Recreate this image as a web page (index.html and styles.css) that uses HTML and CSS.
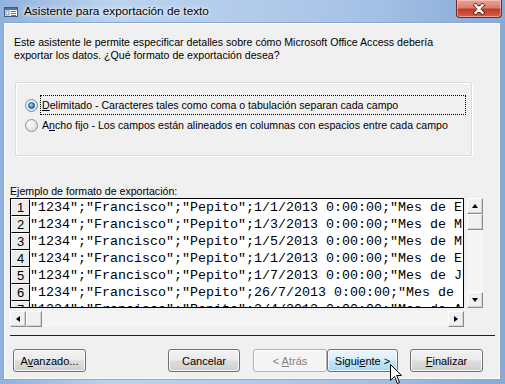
FILE: index.html
```html
<!DOCTYPE html>
<html lang="es">
<head>
<meta charset="UTF-8">
<title>Asistente para exportación de texto</title>
<link rel="stylesheet" href="styles.css">
</head>
<body>
  <div class="window">
    <div class="titlebar">
      <svg class="app-icon" width="14" height="10" viewBox="0 0 14 10">
        <rect x="0.5" y="0.5" width="13" height="9" fill="#fff" stroke="#3a5a8a"/>
        <rect x="1" y="1" width="12" height="2" fill="#4a74b0"/>
        <rect x="2" y="4" width="3" height="4" fill="none" stroke="#5a78a0" stroke-width="0.8"/>
        <line x1="7" y1="4.5" x2="12" y2="4.5" stroke="#5a78a0"/>
        <line x1="7" y1="6.5" x2="12" y2="6.5" stroke="#5a78a0"/>
        <line x1="7" y1="8.5" x2="12" y2="8.5" stroke="#5a78a0"/>
      </svg>
      <span class="title">Asistente para exportación de texto</span>
      <div class="close-btn">
        <svg width="14" height="12" viewBox="0 0 14 12">
          <path d="M2 1 L7 5 L12 1 M2 11 L7 7 L12 11" fill="none" stroke="#5b1a14" stroke-width="4"/>
          <path d="M2.5 1.5 L7 5.2 L11.5 1.5 M2.5 10.5 L7 6.8 L11.5 10.5 M3 1.5 L11 10.5 M11 1.5 L3 10.5" fill="none" stroke="#fff" stroke-width="2.2"/>
        </svg>
      </div>
    </div>

    <div class="client">
      <p class="intro">Este asistente le permite especificar detalles sobre cómo Microsoft Office Access debería<br>exportar los datos. ¿Qué formato de exportación desea?</p>

      <div class="groupbox">
        <div class="option">
          <span class="radio checked"></span>
          <span class="option-text focused"><u>D</u>elimitado - Caracteres tales como coma o tabulación separan cada campo</span>
        </div>
        <div class="option">
          <span class="radio"></span>
          <span class="option-text">A<u>n</u>cho fijo - Los campos están alineados en columnas con espacios entre cada campo</span>
        </div>
      </div>

      <div class="preview-label">Ejemplo de formato de exportación:</div>

      <div class="preview">
        <div class="grid">
          <div class="row"><span class="num">1</span><span class="data">"1234";"Francisco";"Pepito";1/1/2013 0:00:00;"Mes de E</span></div>
          <div class="row"><span class="num">2</span><span class="data">"1234";"Francisco";"Pepito";1/3/2013 0:00:00;"Mes de M</span></div>
          <div class="row"><span class="num">3</span><span class="data">"1234";"Francisco";"Pepito";1/5/2013 0:00:00;"Mes de M</span></div>
          <div class="row"><span class="num">4</span><span class="data">"1234";"Francisco";"Pepito";1/1/2013 0:00:00;"Mes de E</span></div>
          <div class="row"><span class="num">5</span><span class="data">"1234";"Francisco";"Pepito";1/7/2013 0:00:00;"Mes de J</span></div>
          <div class="row"><span class="num">6</span><span class="data">"1234";"Francisco";"Pepito";26/7/2013 0:00:00;"Mes de</span></div>
          <div class="row"><span class="num">7</span><span class="data">"1234";"Francisco";"Pepito";2/4/2013 0:00:00;"Mes de A</span></div>
        </div>
        <div class="vscroll">
          <div class="sb-btn"><span class="arrow up"></span></div>
          <div class="sb-btn thumb"></div>
          <div class="sb-track"></div>
          <div class="sb-btn"><span class="arrow down"></span></div>
        </div>
        <div class="hscroll">
          <div class="sb-btn"><span class="arrow left"></span></div>
          <div class="sb-btn thumb"></div>
          <div class="sb-track"></div>
          <div class="sb-btn"><span class="arrow right"></span></div>
        </div>
      </div>

      <div class="separator"></div>

      <div class="buttons">
        <button class="btn btn-advanced">A<u>v</u>anzado...</button>
        <button class="btn btn-cancel">Cancelar</button>
        <button class="btn btn-back" disabled>&lt; <u>A</u>trás</button>
        <button class="btn btn-next hover">Sigui<u>e</u>nte &gt;</button>
        <button class="btn btn-finish"><u>F</u>inalizar</button>
      </div>
    </div>

    <svg class="cursor" width="13" height="21" viewBox="0 0 13 21">
      <path d="M0.5 0.5 L0.5 16.5 L4.5 12.5 L7.5 19.5 L9.5 18.5 L6.7 11.5 L11.5 11.5 Z" fill="#fff" stroke="#000" stroke-width="1"/>
    </svg>
  </div>
</body>
</html>
```

FILE: styles.css
```css
body {
  margin: 0;
  font-family: "Liberation Sans", Arial, sans-serif;
  font-size: 10.6px;
  color: #000;
}

.window {
  position: relative;
  width: 505px;
  height: 384px;
  display: flex;
  flex-direction: column;
  overflow: hidden;
  background: linear-gradient(to right, #8fb2de 0%, #bcd3ee 22%, #b2cbea 50%, #a3c0e5 75%, #86a9d7 100%);
}

/* barra de título */
.titlebar {
  height: 23px;
  display: flex;
  align-items: flex-start;
  flex: none;
}

.app-icon {
  margin: 7px 0 0 4px;
}

.title {
  margin: 4px 0 0 6px;
  font-size: 11.8px;
  line-height: 15px;
  color: #000;
  text-shadow: 0 0 6px #fff, 0 0 3px #fff;
}

.close-btn {
  margin-left: auto;
  margin-right: 3px;
  width: 46px;
  height: 18px;
  box-sizing: border-box;
  border: 1px solid #6e2a22;
  border-top: none;
  border-radius: 0 0 4px 4px;
  background: linear-gradient(#e9a394 0%, #d98072 45%, #c33a28 55%, #d6604c 100%);
  box-shadow: inset 0 0 0 1px rgba(255, 220, 210, 0.5);
  display: flex;
  justify-content: center;
  align-items: center;
}

/* área cliente */
.client {
  flex: 1;
  margin: 0 5px 5px 4px;
  background: #f0f0f0;
  border: 1px solid #fbfbfb;
  outline: 1px solid #8aa6c8;
  padding: 0 0 0 5px;
  display: flex;
  flex-direction: column;
}

.intro {
  margin: 12px 0 0 4px;
  line-height: 13px;
}

.groupbox {
  margin: 20px 0 0 5px;
  width: 457px;
  height: 74px;
  box-sizing: border-box;
  border: 1px solid #d5dfe5;
  border-radius: 2px;
  box-shadow: inset 1px 1px 0 #fff, 1px 1px 0 #fff;
  padding-top: 12px;
}

.option {
  display: flex;
  align-items: center;
  height: 20px;
}

.radio {
  width: 13px;
  height: 13px;
  box-sizing: border-box;
  margin-left: 9px;
  border-radius: 50%;
  border: 1px solid #8e8f8f;
  background: radial-gradient(circle at 35% 35%, #fafafa 0%, #e4e4e4 60%, #d0d0d0 100%);
  display: flex;
  justify-content: center;
  align-items: center;
}

.radio.checked {
  border-color: #6e8ea8;
}

.radio.checked::after {
  content: "";
  width: 5px;
  height: 5px;
  border-radius: 50%;
  background: radial-gradient(circle at 40% 35%, #9fe0f8 0%, #2f89c4 60%, #1b5f97 100%);
  border: 1px solid #1c5180;
}

.option-text {
  margin-left: 2px;
  width: 426px;
  height: 20px;
  box-sizing: border-box;
  border: 1px dotted transparent;
  padding-left: 1px;
  line-height: 18px;
  white-space: nowrap;
}

.option-text.focused {
  border-color: #000;
}

.preview-label {
  margin-top: 29px;
  line-height: 13px;
}

/* vista previa */
.preview {
  display: grid;
  grid-template-columns: 454px 16px;
  grid-template-rows: 110px 16px;
  column-gap: 3px;
  row-gap: 3px;
}

.grid {
  border: 1px solid #000;
  background: #fff;
  overflow: hidden;
}

.row {
  display: flex;
  height: 17px;
}

.num {
  flex: none;
  width: 19px;
  box-sizing: border-box;
  border-right: 1px solid #000;
  border-bottom: 1px solid #000;
  border-top: 1px solid #fff;
  border-left: 1px solid #fff;
  background: #ececec;
  font-size: 13px;
  line-height: 15px;
  text-align: center;
}

.data {
  font-family: "Liberation Mono", "Courier New", monospace;
  font-size: 13.33px;
  line-height: 17px;
  white-space: pre;
}

.vscroll,
.hscroll {
  display: flex;
  background: #f5f5f5;
}

.vscroll {
  flex-direction: column;
}

.sb-btn {
  flex: none;
  width: 16px;
  height: 16px;
  box-sizing: border-box;
  background: #f0f0f0;
  border-top: 1px solid #fff;
  border-left: 1px solid #fff;
  border-right: 1px solid #8c8c8c;
  border-bottom: 1px solid #8c8c8c;
  box-shadow: inset -1px -1px 0 #d4d4d4;
  display: flex;
  justify-content: center;
  align-items: center;
}

.sb-track {
  flex: 1;
}

.arrow {
  width: 0;
  height: 0;
  border: 3.5px solid transparent;
}

.arrow.up {
  border-bottom: 4px solid #000;
  border-top-width: 0;
  margin-bottom: 1px;
}

.arrow.down {
  border-top: 4px solid #000;
  border-bottom-width: 0;
}

.arrow.left {
  border-right: 4px solid #000;
  border-left-width: 0;
}

.arrow.right {
  border-left: 4px solid #000;
  border-right-width: 0;
}

.separator {
  margin-top: 8px;
  width: 485px;
  height: 1px;
  background: #1e1e1e;
}

/* botones */
.buttons {
  display: flex;
  margin-top: 13px;
}

.btn {
  height: 23px;
  width: 73px;
  box-sizing: border-box;
  padding: 0;
  border: 1px solid #707070;
  border-radius: 3px;
  background: linear-gradient(#f2f2f2 0%, #ebebeb 48%, #dddddd 52%, #cfcfcf 100%);
  box-shadow: inset 0 0 0 1px rgba(255, 255, 255, 0.75);
  font-family: "Liberation Sans", Arial, sans-serif;
  font-size: 11px;
  color: #000;
}

.btn-advanced {
  margin-left: 3px;
}

.btn-cancel {
  margin-left: 82px;
  width: 72px;
}

.btn-back {
  margin-left: 13px;
  width: 74px;
  border-color: #adb2b5;
  background: #f4f4f4;
  color: #838383;
}

.btn-next {
  width: 71px;
}

.btn-next.hover {
  border-color: #3c7fb1;
  background: linear-gradient(#eaf6fd 0%, #d9f0fc 48%, #bee6fd 52%, #a7d9f5 100%);
}

.btn-finish {
  margin-left: 12px;
}

.cursor {
  position: absolute;
  left: 390px;
  top: 364px;
}
```
